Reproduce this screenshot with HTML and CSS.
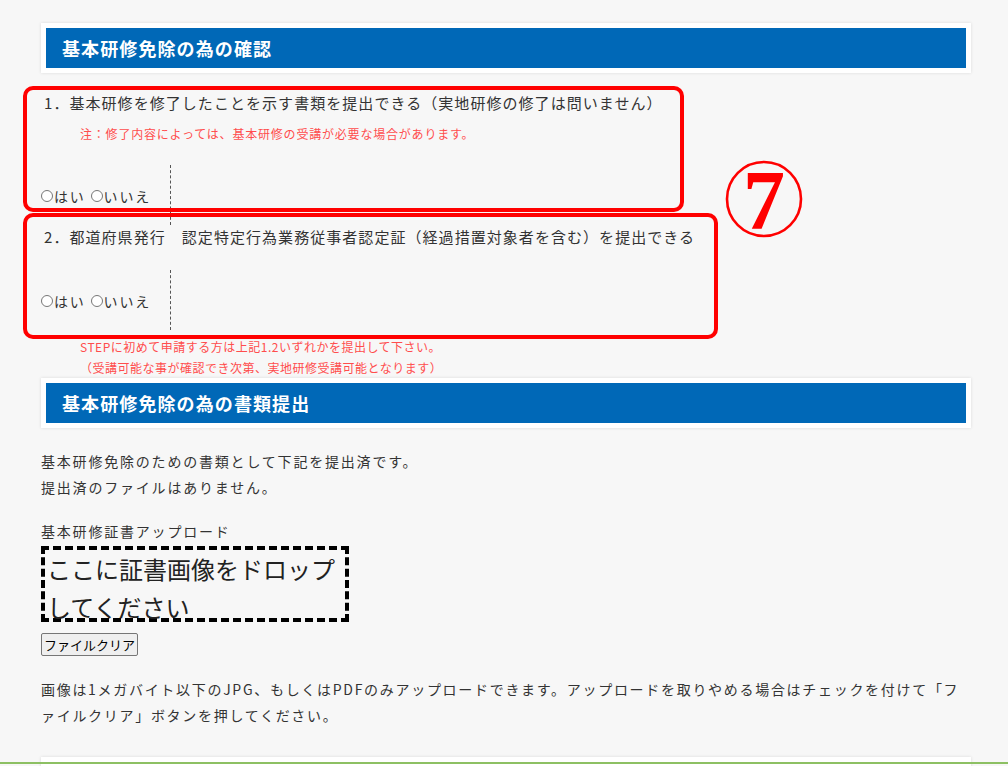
FILE: index.html
```html
<!DOCTYPE html>
<html lang="ja">
<head>
    <meta charset="UTF-8">
    <meta name="viewport" content="width=device-width, initial-scale=1.0">
    <title>基本研修免除</title>
    <link rel="stylesheet" href="styles.css">
</head>
<body>

<div class="page">
    <div class="section-head">
        <h2>基本研修免除の為の確認</h2>
    </div>

    <div class="q-item first">
        <p class="q-text">1．基本研修を修了したことを示す書類を提出できる（実地研修の修了は問いません）</p>
        <p class="q-note">注：修了内容によっては、基本研修の受講が必要な場合があります。</p>
        <div class="q-row">
            <div class="q-choice">
                <label><input type="radio" name="q1">はい</label>
                <label><input type="radio" name="q1">いいえ</label>
            </div>
            <div class="q-rest"></div>
        </div>
    </div>

    <div class="q-item">
        <p class="q-text">2．都道府県発行　認定特定行為業務従事者認定証（経過措置対象者を含む）を提出できる</p>
        <div class="q-row">
            <div class="q-choice">
                <label><input type="radio" name="q2">はい</label>
                <label><input type="radio" name="q2">いいえ</label>
            </div>
            <div class="q-rest"></div>
        </div>
    </div>

    <div class="step-note">
        <p>STEPに初めて申請する方は上記1.2いずれかを提出して下さい。</p>
        <p>（受講可能な事が確認でき次第、実地研修受講可能となります）</p>
    </div>

    <div class="section-head">
        <h2>基本研修免除の為の書類提出</h2>
    </div>

    <p class="submitted">基本研修免除のための書類として下記を提出済です。<br>提出済のファイルはありません。</p>

    <p class="upload-label">基本研修証書アップロード</p>
    <div class="drop-zone">ここに証書画像をドロップしてください</div>
    <button class="clear-btn" type="button">ファイルクリア</button>

    <p class="upload-help">画像は1メガバイト以下のJPG、もしくはPDFのみアップロードできます。アップロードを取りやめる場合はチェックを付けて「ファイルクリア」ボタンを押してください。</p>

    <div class="next-card"></div>

    <!-- annotation marks over the screenshot -->
    <div class="mark mark-1"></div>
    <div class="mark mark-2"></div>
    <svg class="mark-num" width="100" height="100" viewBox="0 0 100 100">
        <circle cx="50" cy="50" r="37" fill="none" stroke="#ff0000" stroke-width="2.6"/>
        <text x="50" y="80" text-anchor="middle" font-family="Liberation Serif, serif" font-weight="bold" font-size="84" fill="#ff0000">7</text>
    </svg>
</div>

<div class="bottom-line"></div>

</body>
</html>
```

FILE: styles.css
```css
body {
    margin: 0;
    background-color: #f7f7f7;
    color: #333;
    font-family: "Noto Sans CJK JP", "Noto Sans", sans-serif;
    font-size: 14px;
    overflow: hidden;
}
p {
    margin: 0;
}
.page {
    position: relative;
    width: 930px;
    padding: 23px 37px 0 41px;
}

.section-head {
    background-color: #fff;
    padding: 5px;
    box-shadow: 0 0 3px rgba(0, 0, 0, 0.12);
}
.section-head h2 {
    margin: 0;
    height: 40px;
    line-height: 40px;
    padding-left: 16px;
    background-color: #0068b7;
    color: #fff;
    font-size: 18px;
    font-weight: bold;
    letter-spacing: 1.1px;
}

.q-item.first {
    margin-top: 18px;
}
.q-text {
    padding-left: 3px;
    font-size: 15px;
    line-height: 24px;
    letter-spacing: 1.05px;
}
.q-note {
    margin-top: 9px;
    padding-left: 39px;
    color: #ff4d4d;
    font-size: 12px;
    line-height: 20px;
    letter-spacing: 0.8px;
}
.q-row {
    display: flex;
    height: 60px;
    margin-top: 21px;
}
.q-choice {
    width: 130px;
    border-right: 1px dashed #555;
    display: flex;
    align-items: center;
    gap: 5px;
    padding-top: 2px;
    box-sizing: border-box;
    letter-spacing: 1.8px;
}
.q-choice label {
    display: flex;
    align-items: center;
}
.q-choice input {
    -webkit-appearance: none;
    appearance: none;
    width: 12px;
    height: 12px;
    margin: 0 1px 0 0;
    border: 1px solid #777;
    border-radius: 50%;
    background-color: #fff;
}
.q-rest {
    flex: 1;
}

.step-note {
    margin-top: 6px;
    padding-left: 39px;
    color: #ff4d4d;
    font-size: 12px;
    line-height: 21px;
    letter-spacing: 0.5px;
}

.submitted {
    margin-top: 20px;
    line-height: 26px;
    letter-spacing: 1.8px;
}
.upload-label {
    margin-top: 19px;
    line-height: 24px;
    letter-spacing: 1.8px;
}
.drop-zone {
    width: 308px;
    height: 76px;
    box-sizing: border-box;
    margin-top: 3px;
    padding: 0 2px;
    border: 4px dashed #000;
    font-size: 24px;
    line-height: 38px;
    color: #222;
}
.clear-btn {
    display: block;
    margin-top: 11px;
    height: 23px;
    padding: 0 2px;
    font-family: "Noto Sans CJK JP", sans-serif;
    font-size: 13px;
    color: #000;
    background-color: #efefef;
    border: 1px solid #767676;
    border-radius: 2px;
}
.upload-help {
    margin-top: 20px;
    line-height: 26px;
    letter-spacing: 1.7px;
}

.next-card {
    margin-top: 29px;
    height: 40px;
    background-color: #fff;
    box-shadow: 0 0 3px rgba(0, 0, 0, 0.12);
}

.mark {
    position: absolute;
    left: 23px;
    border: 4px solid #ff0000;
    border-radius: 10px;
    box-sizing: border-box;
}
.mark-1 {
    top: 86px;
    width: 661px;
    height: 126px;
}
.mark-2 {
    top: 213px;
    width: 695px;
    height: 126px;
}
.mark-num {
    position: absolute;
    left: 714px;
    top: 149px;
}

.bottom-line {
    position: fixed;
    left: 0;
    right: 0;
    bottom: 2px;
    height: 2px;
    background-color: #8dc063;
}
```
